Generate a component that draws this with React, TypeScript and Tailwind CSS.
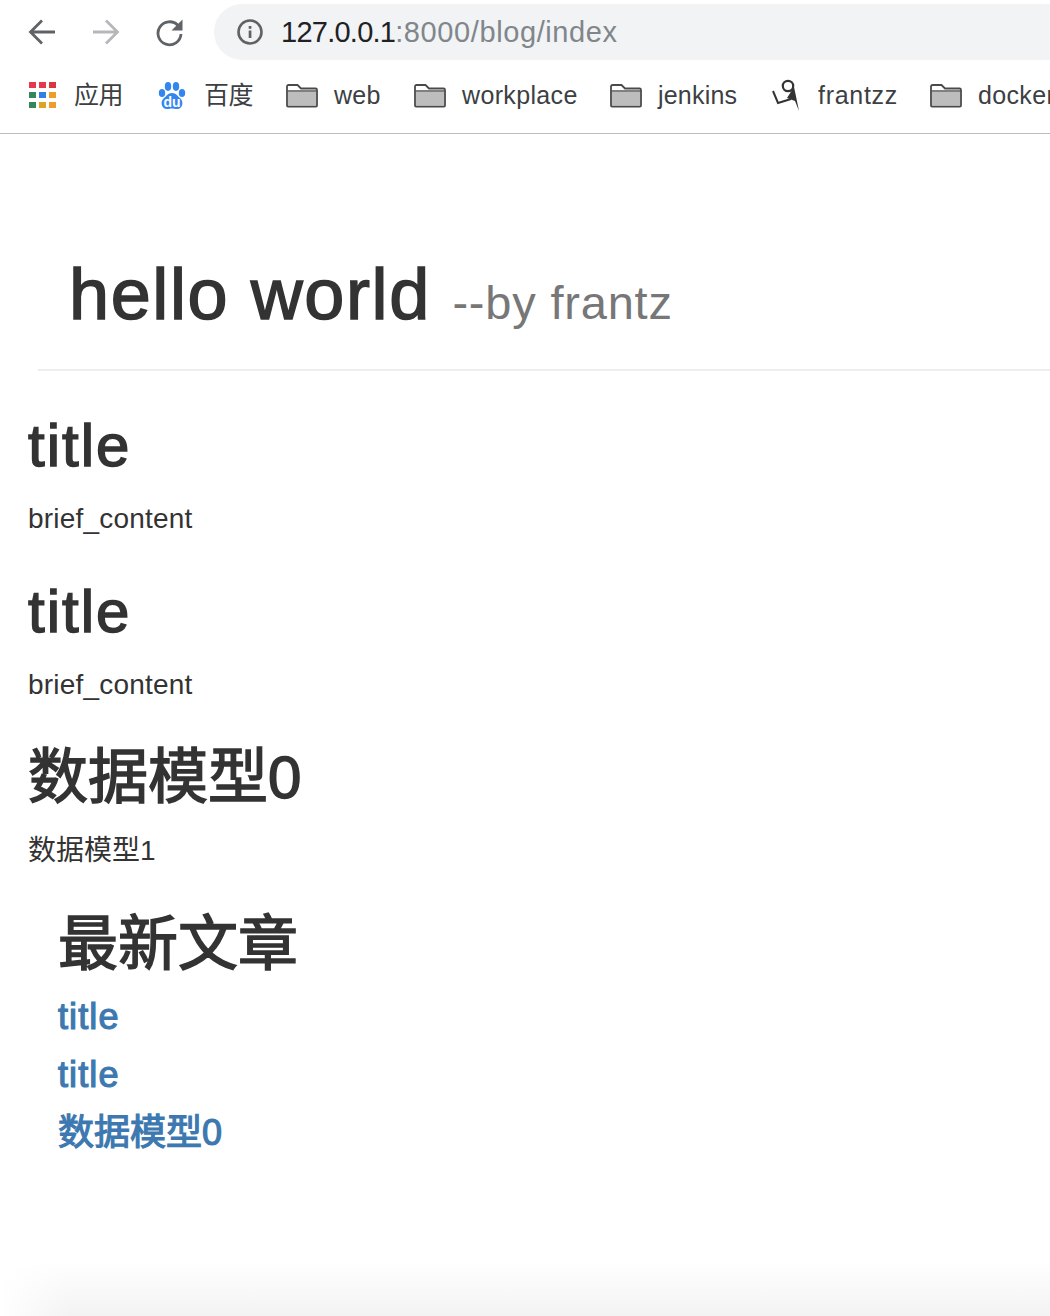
const SANS = "font-['Liberation_Sans','Noto_Sans_CJK_SC',sans-serif]";
// the reference has a medium weight that Liberation lacks: regular + thin stroke
const MEDIUM = "font-normal [-webkit-text-stroke:1.500px_#333]";

function Back() {
  return (
    <svg width="30" height="30" viewBox="0 0 30 30" fill="none" stroke="#5f6368" strokeWidth="2.8">
      <path d="M28 15H4M15 3.500 3.500 15 15 26.500" />
    </svg>
  );
}

function Forward() {
  return (
    <svg width="30" height="30" viewBox="0 0 30 30" fill="none" stroke="#b5b7ba" strokeWidth="2.8">
      <path d="M2 15h24M15 3.500 26.500 15 15 26.500" />
    </svg>
  );
}

function Reload() {
  return (
    <svg width="30" height="30" viewBox="0 0 30 30" fill="none">
      <path d="M23 8.500A11.500 11.500 0 1 0 26 17" stroke="#5f6368" strokeWidth="2.800" />
      <path d="M27.500 2.500v11h-11z" fill="#5f6368" />
    </svg>
  );
}

function Info() {
  return (
    <svg width="28" height="28" viewBox="0 0 28 28" fill="none">
      <circle cx="14" cy="14" r="11.500" stroke="#5f6368" strokeWidth="2.600" />
      <rect x="12.700" y="12.500" width="2.700" height="7.500" fill="#5f6368" />
      <rect x="12.700" y="8" width="2.700" height="2.800" fill="#5f6368" />
    </svg>
  );
}

function Apps() {
  const colors = ["#e8364f", "#e8364f", "#d9363e", "#34875a", "#2f7fe6", "#ee9d2c", "#34875a", "#dba422", "#ee9d2c"];
  return (
    <div className="grid grid-cols-3 gap-[3.500px] w-[27px] ml-[2px]">
      {colors.map((c, i) => (
        <span key={i} className="block w-[6.500px] h-[6.500px]" style={{ background: c }} />
      ))}
    </div>
  );
}

function Baidu() {
  return (
    <svg width="30" height="30" viewBox="0 0 30 30">
      <g fill="#3385f0">
        <ellipse cx="5" cy="13" rx="3.200" ry="4" />
        <ellipse cx="11" cy="6.500" rx="3.200" ry="4.400" />
        <ellipse cx="19" cy="6.500" rx="3.200" ry="4.400" />
        <ellipse cx="25" cy="13" rx="3.200" ry="4" />
        <path d="M15 13c4 0 5.500 3 8 5 4 3.200 3 11-3 11-2 0-3.300-.6-5-.6s-3 .6-5 .6c-6 0-7-7.800-3-11 2.500-2 4-5 8-5z" />
      </g>
      <text x="15" y="26.500" textAnchor="middle" fontSize="14" fontWeight="700" fontFamily="Liberation Sans" fill="#fff">du</text>
    </svg>
  );
}

function Folder() {
  return (
    <svg width="34" height="26" viewBox="0 0 34 26">
      <path d="M2 4.500A1.500 1.500 0 0 1 3.500 3h9L16 6.500h14.500A1.500 1.500 0 0 1 32 8v15.500a1 1 0 0 1-1 1H3a1 1 0 0 1-1-1z" fill="#fff" stroke="#4a4a4a" strokeWidth="1.800" />
      <path d="M3 10h28v13.500H3z" fill="#bdbdbd" />
      <path d="M2.500 9h29" stroke="#4a4a4a" strokeWidth="1.400" />
    </svg>
  );
}

function Frantzz() {
  return (
    <svg width="30" height="34" viewBox="0 0 30 34" fill="none">
      <circle cx="17" cy="8" r="5.200" stroke="#333" strokeWidth="2.200" />
      <path d="M2 13l5 12 13-4" stroke="#333" strokeWidth="2" />
      <path d="M23 9l1.500 7 3.500 17-4-10-8-3z" fill="#333" />
    </svg>
  );
}

function Bookmark({ icon, label, className, labelClass = "" }: { icon: React.ReactNode; label: string; className: string; labelClass?: string }) {
  return (
    <div className={"flex items-center shrink-0 " + className}>
      <span className="flex items-center justify-center shrink-0">{icon}</span>
      <span className={"text-[25px] leading-none text-[#3c4043] whitespace-nowrap " + labelClass}>{label}</span>
    </div>
  );
}

function Toolbar() {
  return (
    <div className="overflow-hidden border-b border-[#bdbdbd] h-[134px]">
      <div className="flex items-center h-[56px] mt-[4px] pl-[27px]">
        <Back />
        <span className="ml-[34px]"><Forward /></span>
        <span className="ml-[34px]"><Reload /></span>
        <div className="flex items-center flex-1 h-[56px] ml-[29px] rounded-l-[28px] bg-[#f1f3f4] pl-[22px]">
          <Info />
          <span className="ml-[17px] text-[29px] leading-none tracking-[-0.75px] text-[#202124]">
            127.0.0.1<span className="tracking-[0.6px] text-[#80868b]">:8000/blog/index</span>
          </span>
        </div>
      </div>
      <div className="flex items-center h-[70px] pl-[27px] whitespace-nowrap">
        <Bookmark icon={<Apps />} label="应用" className="w-[130px] gap-[18px]" labelClass="tracking-[-0.5px]" />
        <Bookmark icon={<Baidu />} label="百度" className="w-[128px] gap-[17px]" labelClass="tracking-[-0.5px]" />
        <Bookmark icon={<Folder />} label="web" className="w-[128px] gap-[15px]" labelClass="tracking-[0.3px]" />
        <Bookmark icon={<Folder />} label="workplace" className="w-[196px] gap-[15px]" labelClass="tracking-[0.35px]" />
        <Bookmark icon={<Folder />} label="jenkins" className="w-[162px] gap-[15px]" labelClass="tracking-[0.2px]" />
        <Bookmark icon={<Frantzz />} label="frantzz" className="w-[158px] gap-[17px]" labelClass="tracking-[0.7px]" />
        <Bookmark icon={<Folder />} label="docker" className="gap-[15px]" labelClass="tracking-[0.35px]" />
      </div>
    </div>
  );
}

function Post({ title, brief, latin }: { title: string; brief: string; latin?: boolean }) {
  return (
    <div>
      <h2 className={"text-[60px] leading-[66px] text-[#333] mt-[40px] mb-[20px] " + MEDIUM + (latin ? " tracking-[2px]" : "")}>{title}</h2>
      <p className={"text-[28px] leading-[40px] text-[#333]" + (latin ? " tracking-[0.2px]" : "")}>{brief}</p>
    </div>
  );
}

export default function App() {
  return (
    <div className={SANS + " relative h-[1316px] w-[1050px] overflow-hidden bg-white"}>
      <Toolbar />
      <div className="ml-[38px] mt-[121px] border-b-2 border-[#eeeeee] h-[116px] pl-[31px]">
        <h1 className={"text-[72px] leading-[79px] text-[#333] whitespace-nowrap tracking-[1.6px] " + MEDIUM}>
          hello world <small className="text-[47px] tracking-[0.8px] text-[#777] [-webkit-text-stroke:0]">--by frantz</small>
        </h1>
      </div>
      <div className="pl-[28px] pt-[2px]">
        <Post title="title" brief="brief_content" latin />
        <Post title="title" brief="brief_content" latin />
        <Post title="数据模型0" brief="数据模型1" />
      </div>
      <h2 className={"ml-[58px] text-[60px] leading-[66px] text-[#333] mt-[41px] " + MEDIUM}>最新文章</h2>
      <ul className="ml-[58px] mt-[10px] text-[36px] leading-[58px] font-normal [-webkit-text-stroke:1.200px_#3d79b0] text-[#3d79b0]">
        <li className="tracking-[1.100px]">title</li>
        <li className="tracking-[1.100px]">title</li>
        <li>数据模型0</li>
      </ul>
      <div className="absolute inset-x-0 bottom-0 h-[55px] bg-gradient-to-b from-white to-[#f3f3f3]" />
      <div className="absolute left-0 bottom-0 h-[55px] w-[70px] bg-gradient-to-r from-white to-transparent" />
    </div>
  );
}
